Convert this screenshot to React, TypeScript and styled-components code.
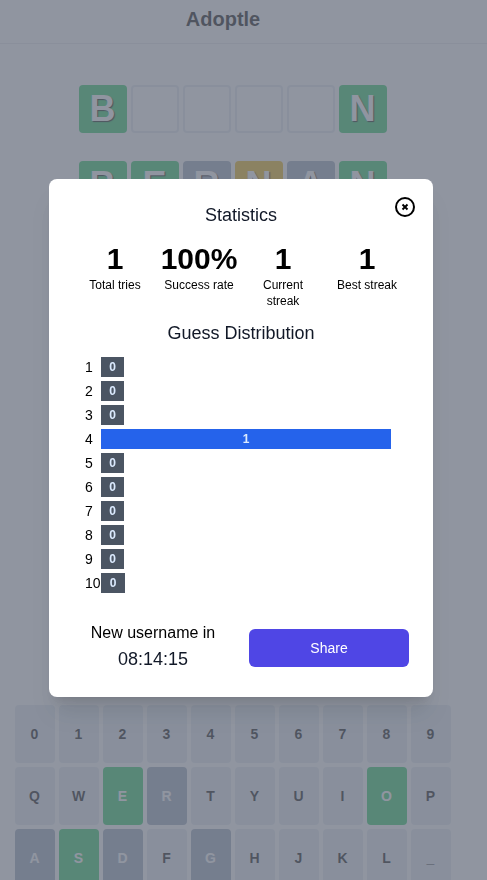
import React from "react";
import styled, { createGlobalStyle } from "styled-components";

const GlobalStyle = createGlobalStyle`
  *, *::before, *::after { box-sizing: border-box; }
  body {
    margin: 0;
    overflow: hidden;
    background: #fff;
    color: #000;
    font-family: "Liberation Sans", Arial, sans-serif;
    font-size: 16px;
    line-height: 24px;
  }
  h1, h3, p { margin: 0; }
`;

type Status = "blank" | "idle" | "correct" | "present" | "absent";

const fills: Record<Status, string> = {
  blank: "transparent",
  idle: "#e2e8f0",
  correct: "#22c55e",
  present: "#eab308",
  absent: "#94a3b8",
};

const Page = styled.div`
  height: 880px;
  overflow: hidden;
  display: flex;
  flex-direction: column;
`;

const Header = styled.header`
  flex: none;
  height: 44px;
  padding: 5px 41px 0 0;
  border-bottom: 1px solid #e5e7eb;
  text-align: center;
`;

const Brand = styled.h1`
  font-size: 20px;
  line-height: 28px;
  font-weight: 700;
`;

const Board = styled.main`
  flex: none;
  height: 661px;
  padding: 41px 21px 0 0;
  display: flex;
  flex-direction: column;
  align-items: center;
  gap: 28px;
`;

const Guess = styled.div`
  display: flex;
  gap: 4px;
`;

const Cell = styled.div<{ $status: Status }>`
  width: 48px;
  height: 48px;
  padding-right: 1px;
  display: flex;
  align-items: center;
  justify-content: center;
  border: ${(p) => (p.$status === "blank" ? "2px solid #e2e8f0" : "0")};
  border-radius: 4px;
  background: ${(p) => fills[p.$status]};
  color: #fff;
  font-size: 36px;
  line-height: 40px;
  font-weight: 700;
  text-shadow: 1px 1px 1px #000;
`;

const Keyboard = styled.div`
  padding-left: 15px;
  display: flex;
  flex-direction: column;
  gap: 4px;
`;

const KeyRow = styled.div`
  display: flex;
  gap: 4px;
`;

const Key = styled.div<{ $status: Status }>`
  width: 40px;
  height: 58px;
  padding-right: 1px;
  display: flex;
  align-items: center;
  justify-content: center;
  border-radius: 4px;
  background: ${(p) => fills[p.$status]};
  color: ${(p) => (p.$status === "idle" ? "#000" : "#fff")};
  font-size: 14px;
  line-height: 20px;
  font-weight: 700;
`;

const Overlay = styled.div`
  position: fixed;
  inset: 0;
  padding: 179px 0 0 49px;
  background: rgba(107, 114, 128, 0.75);
`;

const Dialog = styled.section`
  position: relative;
  width: 384px;
  height: 518px;
  padding: 24px;
  border-radius: 8px;
  background: #fff;
  box-shadow: 0 20px 25px -5px rgba(0, 0, 0, 0.1), 0 8px 10px -6px rgba(0, 0, 0, 0.1);
`;

const CloseButton = styled.button`
  position: absolute;
  top: 16px;
  right: 16px;
  width: 24px;
  height: 24px;
  padding: 0;
  border: 0;
  background: none;
  svg { display: block; }
`;

const Heading = styled.h3`
  font-size: 18px;
  line-height: 24px;
  font-weight: 400;
  color: #111827;
  text-align: center;
`;

const Stats = styled.div`
  height: 94px;
  padding-top: 14px;
  display: grid;
  grid-template-columns: repeat(4, 84px);
`;

const Stat = styled.div`
  padding: 0 10px;
  display: flex;
  flex-direction: column;
  align-items: center;
  text-align: center;
`;

const StatValue = styled.div`
  font-size: 30px;
  line-height: 36px;
  font-weight: 700;
  white-space: nowrap;
`;

const StatLabel = styled.div<{ $wrap: boolean }>`
  font-size: 12px;
  line-height: 16px;
  white-space: ${(p) => (p.$wrap ? "normal" : "nowrap")};
`;

const Chart = styled.div`
  margin-top: 12px;
  padding: 0 18px 0 12px;
  display: flex;
  flex-direction: column;
  gap: 4px;
`;

const ChartRow = styled.div`
  height: 20px;
  display: flex;
  align-items: center;
`;

const RowLabel = styled.div`
  width: 16px;
  font-size: 14px;
  line-height: 20px;
`;

const Bar = styled.div<{ $kind: "empty" | "wide" | "full" }>`
  width: ${(p) => ({ empty: "23px", wide: "24px", full: "290px" })[p.$kind]};
  height: 20px;
  background: ${(p) => (p.$kind === "full" ? "#2563eb" : "#4b5563")};
  color: #dbeafe;
  font-size: 12px;
  line-height: 20px;
  font-weight: 700;
  text-align: center;
`;

const Footer = styled.div`
  margin-top: 28px;
  display: grid;
  grid-template-columns: 160px 160px;
  column-gap: 16px;
`;

const Countdown = styled.div`
  text-align: center;
`;

const Time = styled.p`
  font-size: 18px;
  line-height: 28px;
  color: #111827;
`;

const ShareButton = styled.button`
  height: 38px;
  margin-top: 8px;
  border: 0;
  border-radius: 6px;
  background: #4f46e5;
  color: #fff;
  font: 400 14px/20px "Liberation Sans", Arial, sans-serif;
`;

const guesses: [string, Status][][] = [
  [["B", "correct"], ["", "blank"], ["", "blank"], ["", "blank"], ["", "blank"], ["N", "correct"]],
  [["B", "correct"], ["E", "correct"], ["R", "absent"], ["N", "present"], ["A", "absent"], ["N", "correct"]],
];

const keyRows = ["0123456789", "QWERTYUIOP", "ASDFGHJKL_"];
const keyStatus: Record<string, Status> = {
  E: "correct", O: "correct", S: "correct",
  R: "absent", A: "absent", D: "absent", G: "absent",
};

const stats = [
  { value: "1", label: "Total tries" },
  { value: "100%", label: "Success rate" },
  { value: "1", label: "Current streak", wrap: true },
  { value: "1", label: "Best streak" },
];

const distribution = [0, 0, 0, 1, 0, 0, 0, 0, 0, 0];

export default function App() {
  return (
    <>
      <GlobalStyle />
      <Page>
        <Header><Brand>Adoptle</Brand></Header>
        <Board>
          {guesses.map((guess, row) => (
            <Guess key={row}>
              {guess.map(([letter, status], i) => <Cell key={i} $status={status}>{letter}</Cell>)}
            </Guess>
          ))}
        </Board>
        <Keyboard>
          {keyRows.map((row) => (
            <KeyRow key={row}>
              {[...row].map((k) => <Key key={k} $status={keyStatus[k] ?? "idle"}>{k}</Key>)}
            </KeyRow>
          ))}
        </Keyboard>
      </Page>
      <Overlay>
        <Dialog role="dialog" aria-label="Statistics">
          <CloseButton aria-label="Close">
            <svg width="24" height="24" viewBox="0 0 24 24" fill="none" stroke="#000" strokeWidth="2">
              <circle cx="12" cy="12" r="9" />
              <path d="M9.5 9.5l5 5M14.5 9.5l-5 5" strokeWidth="1.9" />
            </svg>
          </CloseButton>
          <Heading>Statistics</Heading>
          <Stats>
            {stats.map((s) => (
              <Stat key={s.label}>
                <StatValue>{s.value}</StatValue>
                <StatLabel $wrap={!!s.wrap}>{s.label}</StatLabel>
              </Stat>
            ))}
          </Stats>
          <Heading>Guess Distribution</Heading>
          <Chart>
            {distribution.map((count, i) => (
              <ChartRow key={i}>
                <RowLabel>{i + 1}</RowLabel>
                <Bar $kind={count ? "full" : i === 9 ? "wide" : "empty"}>{count}</Bar>
              </ChartRow>
            ))}
          </Chart>
          <Footer>
            <Countdown>
              <p>New username in</p>
              <Time>08:14:15</Time>
            </Countdown>
            <ShareButton>Share</ShareButton>
          </Footer>
        </Dialog>
      </Overlay>
    </>
  );
}
